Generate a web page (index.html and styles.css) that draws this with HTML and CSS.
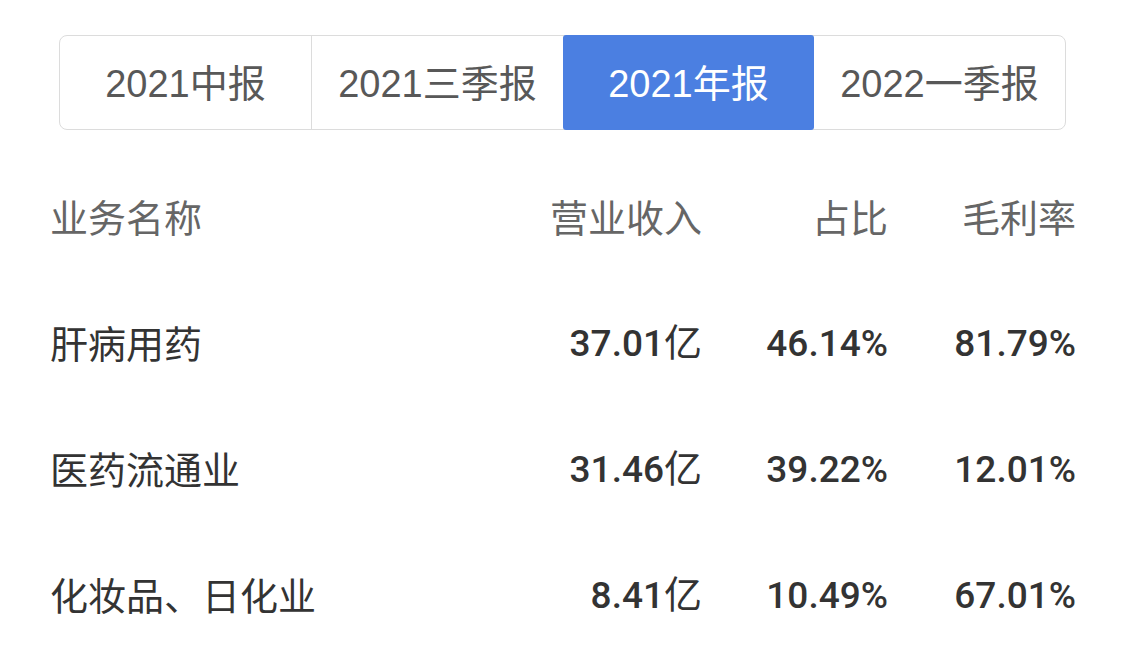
FILE: index.html
```html
<!DOCTYPE html>
<html lang="zh-CN">
<head>
<meta charset="utf-8">
<link rel="stylesheet" href="styles.css">
</head>
<body>
<div class="page">
  <div class="tabs">
    <div class="tab">2021中报</div>
    <div class="tab">2021三季报</div>
    <div class="tab active">2021年报</div>
    <div class="tab">2022一季报</div>
  </div>
  <div class="table">
    <div class="row head">
      <div class="name">业务名称</div>
      <div class="num">营业收入</div>
      <div class="num">占比</div>
      <div class="num">毛利率</div>
    </div>
    <div class="row">
      <div class="name">肝病用药</div>
      <div class="num">37.01<span class="unit">亿</span></div>
      <div class="num">46.14%</div>
      <div class="num">81.79%</div>
    </div>
    <div class="row">
      <div class="name">医药流通业</div>
      <div class="num">31.46<span class="unit">亿</span></div>
      <div class="num">39.22%</div>
      <div class="num">12.01%</div>
    </div>
    <div class="row">
      <div class="name">化妆品、日化业</div>
      <div class="num">8.41<span class="unit">亿</span></div>
      <div class="num">10.49%</div>
      <div class="num">67.01%</div>
    </div>
  </div>
</div>
</body>
</html>
```
FILE: styles.css
```css
html, body {
  margin: 0;
  padding: 0;
  background: #ffffff;
}
body {
  font-family: "Noto Sans CJK SC", "Noto Sans", sans-serif;
}
.page {
  width: 1125px;
  height: 657px;
  overflow: hidden;
  padding-top: 35px;
  box-sizing: border-box;
}
.tabs {
  margin-left: 59px;
  width: 1007px;
  height: 95px;
  box-sizing: border-box;
  border: 1px solid #dcdcdc;
  border-radius: 8px;
  display: flex;
}
.tab {
  flex: 1;
  display: flex;
  align-items: center;
  justify-content: center;
  padding-bottom: 5px;
  font-family: "Liberation Sans", "Noto Sans CJK SC", sans-serif;
  font-size: 38px;
  color: #585858;
  border-left: 1px solid #dcdcdc;
}
.tab:first-child {
  border-left: none;
}
.tab.active {
  background: #4b7fe1;
  color: #ffffff;
  margin: -1px 0;
  border-left: none;
  border-radius: 3px;
}
.tab.active + .tab {
  border-left: none;
}
.table {
  margin: 25px 49px 0 50px;
}
.row {
  display: grid;
  grid-template-columns: 1fr 200px 186px 188px;
  height: 126px;
  align-items: center;
}
.name {
  font-size: 38px;
  color: #333333;
  padding-bottom: 5px;
}
.num {
  text-align: right;
  font-family: Roboto, "Noto Sans CJK SC", sans-serif;
  font-weight: 500;
  font-size: 37px;
  line-height: 44px;
  color: #333333;
}
.unit {
  font-family: "Noto Sans CJK SC", sans-serif;
  font-weight: 400;
  font-size: 38px;
  line-height: 0;
}
.row.head .name,
.row.head .num {
  font-family: "Noto Sans CJK SC", sans-serif;
  font-weight: 400;
  font-size: 38px;
  color: #666666;
}
.row.head .num {
  line-height: normal;
  padding-bottom: 5px;
}
```
